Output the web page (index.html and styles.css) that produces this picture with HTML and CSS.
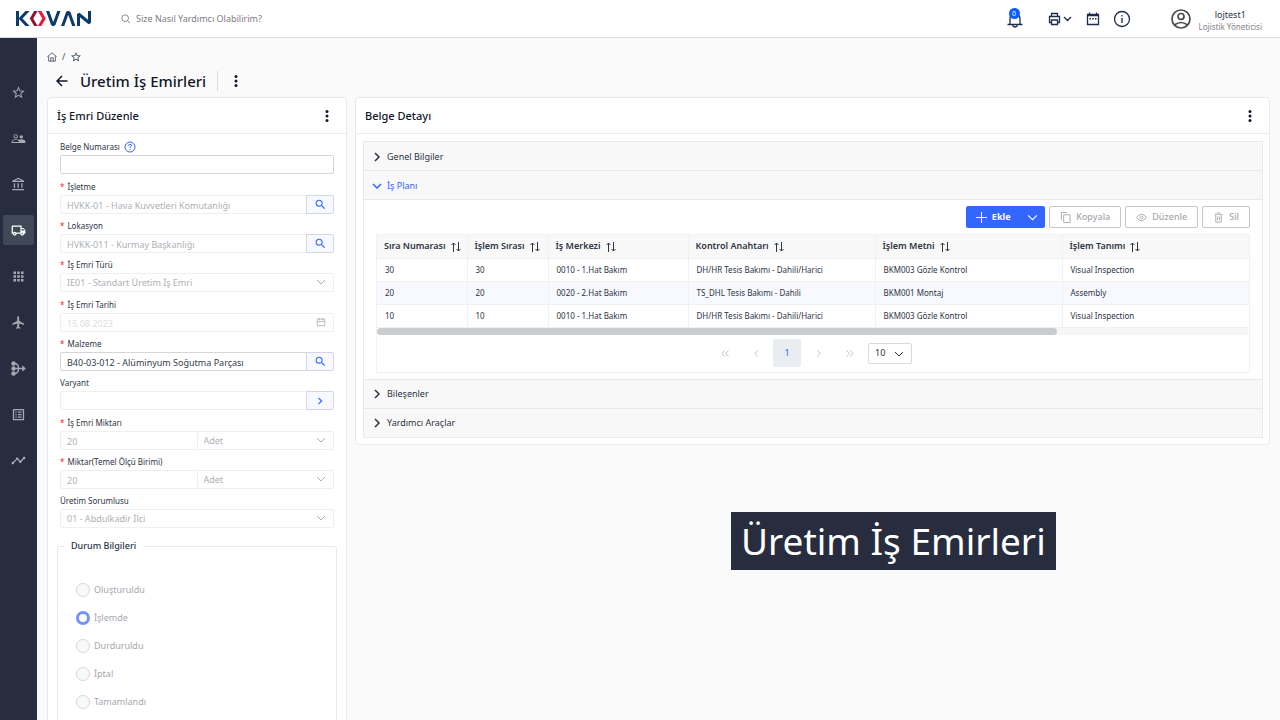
FILE: index.html
```html
<!DOCTYPE html>
<html lang="tr">
<head>
<meta charset="utf-8">
<meta name="viewport" content="width=device-width, initial-scale=1">
<title>Üretim İş Emirleri</title>
<link rel="stylesheet" href="styles.css">
</head>
<body>
<svg class="sprite" aria-hidden="true">
  <symbol id="dots" viewBox="0 0 4 14"><circle cx="2" cy="2.500" r="1.500"/><circle cx="2" cy="7" r="1.500"/><circle cx="2" cy="11.500" r="1.500"/></symbol>
  <symbol id="down" viewBox="0 0 10 10"><path d="M1 3l4 4 4-4" class="line"/></symbol>
  <symbol id="right" viewBox="0 0 10 10"><path d="M3 1l4 4-4 4" class="line"/></symbol>
  <symbol id="star" viewBox="0 0 24 24"><path d="M22 9.240l-7.190-.620L12 2 9.190 8.630 2 9.240l5.460 4.730L5.820 21 12 17.270 18.180 21l-1.630-7.030L22 9.240zM12 15.400l-3.760 2.270 1-4.280-3.320-2.880 4.380-.380L12 6.100l1.710 4.040 4.380.380-3.320 2.880 1 4.280L12 15.400z"/></symbol>
  <symbol id="find" viewBox="0 0 24 24"><path d="M15.500 14h-.790l-.280-.270A6.471 6.471 0 0 0 16 9.500 6.500 6.500 0 1 0 9.500 16c1.610 0 3.090-.590 4.230-1.570l.270.280v.790l5 4.990L20.490 19l-4.990-5zm-6 0C7.010 14 5 11.990 5 9.500S7.010 5 9.500 5 14 7.010 14 9.500 11.990 14 9.500 14z"/></symbol>
  <symbol id="sort" viewBox="0 0 10 10"><path d="M2.500 10V1M.500 3l2-2 2 2M7.500 0v9M5.500 7l2 2 2-2" class="line"/></symbol>
</svg>
<header class="topbar">
  <a class="brand" href="#" aria-label="KOVAN">
    <svg class="logo" viewBox="0 0 75 15" fill="none" stroke-width="3">
      <g stroke="#0b3a6b" fill="none">
        <path d="M1.500 0v15M12.500-1L4.500 7.500l8 8.500"/>
        <path d="M31.300-1l5.200 14.500h1.500L43.200-1" stroke-linejoin="bevel"/>
        <path d="M46.300 16l5.200-14.500H53L58.200 16" stroke-linejoin="bevel"/>
        <path d="M62.500 15V3l11 9V0" stroke-linejoin="bevel"/>
      </g>
      <path d="M20.500-1L15.500 7.500l5 8.500" fill="none" stroke="#8f1430"/>
      <path d="M23-1l5 8.500L23 16" fill="none" stroke="#f0143c"/>
    </svg>
  </a>
  <label class="search"><svg viewBox="0 0 12 12"><circle cx="5" cy="5" r="4" class="line"/><path d="M8 8l3 3" class="line"/></svg><input type="search" aria-label="Ara" placeholder="Size Nasıl Yardımcı Olabilirim?"></label>
  <nav class="tools">
    <button class="bell" aria-label="Bildirimler"><svg viewBox="0 0 18 18"><path d="M1.500 14.500h15M4 14.500V8.500a5 5 0 0 1 10 0v6M6.500 15.500q2.500 3 5 0" class="line"/></svg><span class="badge">0</span></button>
    <button class="print" aria-label="Yazdır"><svg viewBox="0 0 24 14"><path d="M3.500 4V1.500h6V4M3 10.500H1.500V4.500h10v6H10M3.500 8h6v4.500h-6zM16 5l3.500 3.500L23 5" class="line"/></svg></button>
    <button class="cal" aria-label="Takvim"><svg viewBox="0 0 14 14"><path d="M1.500 2.500h11v10h-11zM1.500 3.500h11M3.500 .500v2M10.500 .500v2" class="line"/><path d="M3.500 6h1.500v1.500H3.500zM6.250 6h1.500v1.500h-1.500zM9 6h1.500v1.500H9z"/></svg></button>
    <button class="info" aria-label="Bilgi"><svg viewBox="0 0 18 18"><circle cx="9" cy="9" r="7.500" class="line"/><path d="M9 8v5M9 5v1.500" class="line"/></svg></button>
  </nav>
  <div class="user">
    <svg viewBox="0 0 20 20"><circle cx="10" cy="10" r="9" class="line"/><circle cx="10" cy="7.500" r="3" class="line"/><path d="M3.500 16q6.500-5 13 0" class="line"/></svg>
    <div class="who"><span>lojtest1</span><small>Lojistik Yöneticisi</small></div>
  </div>
</header>
<div class="shell">
  <nav class="rail">
    <a href="#" aria-label="Favoriler"><svg><use href="#star"/></svg></a>
    <a href="#" aria-label="Personel"><svg viewBox="0 0 24 24"><path d="M16.500 13c-1.200 0-3.070.340-4.500 1-1.430-.670-3.300-1-4.500-1C5.330 13 1 14.080 1 16.250V19h22v-2.750c0-2.170-4.330-3.250-6.500-3.250zm-4 4.500h-10v-1.250c0-.540 2.560-1.750 5-1.750s5 1.210 5 1.750v1.250zM7.500 12A3.500 3.500 0 1 0 7.500 5a3.500 3.500 0 0 0 0 7zm0-5.500a2 2 0 1 1 0 4 2 2 0 0 1 0-4zM16.500 12a2.700 2.700 0 1 0 0-5.400 2.700 2.700 0 0 0 0 5.400z"/></svg></a>
    <a href="#" aria-label="Finans"><svg viewBox="0 0 24 24"><path d="M6.500 10h-2v7h2v-7zm6 0h-2v7h2v-7zm8.500 9H2v2h19v-2zm-2.500-9h-2v7h2v-7zm-7-6.740L16.710 6H6.290l5.210-2.740m0-2.260L2 6v2h19V6l-9.500-5z"/></svg></a>
    <a href="#" class="on" aria-label="Lojistik"><svg viewBox="0 0 24 24"><path d="M20 8h-3V4H3c-1.100 0-2 .900-2 2v11h2c0 1.660 1.340 3 3 3s3-1.340 3-3h6c0 1.660 1.340 3 3 3s3-1.340 3-3h2v-5l-3-4zm-.500 1.500l1.960 2.500H17V9.500h2.500zM6 18c-.550 0-1-.450-1-1s.450-1 1-1 1 .450 1 1-.450 1-1 1zm2.220-3c-.550-.610-1.330-1-2.220-1s-1.670.390-2.220 1H3V6h12v9H8.220zM18 18c-.550 0-1-.450-1-1s.450-1 1-1 1 .450 1 1-.450 1-1 1z"/></svg></a>
    <a href="#" aria-label="Uygulamalar"><svg viewBox="0 0 24 24"><path d="M4 8h4V4H4v4zm6 12h4v-4h-4v4zm-6 0h4v-4H4v4zm0-6h4v-4H4v4zm6 0h4v-4h-4v4zm6-10v4h4V4h-4zm-6 4h4V4h-4v4zm6 6h4v-4h-4v4zm0 6h4v-4h-4v4z"/></svg></a>
    <a href="#" aria-label="Uçuş"><svg viewBox="0 0 24 24"><path d="M21 16v-2l-8-5V3.500c0-.830-.670-1.500-1.500-1.500S10 2.670 10 3.500V9l-8 5v2l8-2.500V19l-2 1.500V22l3.500-1 3.500 1v-1.500L13 19v-5.500l8 2.500z"/></svg></a>
    <a href="#" aria-label="Süreç"><svg viewBox="0 0 24 24"><circle cx="4" cy="4" r="3.500"/><circle cx="4" cy="12" r="3.500"/><circle cx="4" cy="20" r="3.500"/><path d="M4 4h3q5 1 5 8t-5 8H4M4 12h18M18 8.500l4 3.500-4 3.500" fill="none" stroke="currentColor" stroke-width="2.200"/></svg></a>
    <a href="#" aria-label="Liste"><svg viewBox="0 0 24 24"><path d="M19 5v14H5V5h14m1.100-2H3.900c-.500 0-.900.400-.900.900v16.200c0 .400.400.900.900.900h16.200c.400 0 .900-.500.900-.900V3.900c0-.500-.500-.900-.900-.900zM11 7h6v2h-6V7zm0 4h6v2h-6v-2zm0 4h6v2h-6zM7 7h2v2H7zm0 4h2v2H7zm0 4h2v2H7z"/></svg></a>
    <a href="#" aria-label="Raporlar"><svg viewBox="0 0 24 24"><path d="M23 8c0 1.100-.900 2-2 2-.180 0-.350-.020-.510-.070l-3.560 3.550c.050.160.070.340.070.520 0 1.100-.900 2-2 2s-2-.900-2-2c0-.180.020-.360.070-.520l-2.550-2.550c-.160.050-.340.070-.520.070s-.360-.020-.520-.070l-4.550 4.560c.050.160.070.330.070.510 0 1.100-.900 2-2 2s-2-.900-2-2 .900-2 2-2c.180 0 .350.020.510.070l4.560-4.550C8.020 9.360 8 9.180 8 9c0-1.100.900-2 2-2s2 .900 2 2c0 .180-.020.360-.070.520l2.550 2.550c.160-.050.340-.070.520-.070s.360.020.520.070l3.550-3.560C19.020 8.350 19 8.180 19 8c0-1.100.900-2 2-2s2 .900 2 2z"/></svg></a>
  </nav>
  <main class="page">
    <div class="crumbs"><a href="#" aria-label="Ana sayfa"><svg viewBox="0 0 12 12"><path d="M.500 5.500L6 1l5.500 4.500M2 5v6h8V5M4.500 11V7h3v4" class="line"/></svg></a><span>/</span><a href="#" aria-label="Favori"><svg class="fav"><use href="#star"/></svg></a></div>
    <div class="title">
      <button class="back" aria-label="Geri"><svg viewBox="0 0 12 12"><path d="M11.500 6H1M6 1L1 6l5 5" class="line"/></svg></button>
      <h1>Üretim İş Emirleri</h1>
      <button class="more" aria-label="Menü"><svg><use href="#dots"/></svg></button>
    </div>
    <div class="panels">
      <section class="panel">
        <div class="phead"><h2>İş Emri Düzenle</h2><button class="more" aria-label="Menü"><svg><use href="#dots"/></svg></button></div>
        <form class="form">
          <div class="group">
            <div class="row"><label for="f1">Belge Numarası <svg class="help" viewBox="0 0 12 12"><circle cx="6" cy="6" r="5" class="line"/><path d="M4.500 4.800q0-1.500 1.500-1.500t1.500 1.300Q7.500 5.500 6 6.200V7M6 8v1" class="line"/></svg></label><div class="field open"><input id="f1"></div></div>
          </div>
          <div class="group">
            <div class="row"><label for="f2" class="req">İşletme</label><div class="field"><input id="f2" disabled value="HVKK-01 - Hava Kuvvetleri Komutanlığı"><button type="button" aria-label="Bul"><svg><use href="#find"/></svg></button></div></div>
            <div class="row"><label for="f3" class="req">Lokasyon</label><div class="field"><input id="f3" disabled value="HVKK-011 - Kurmay Başkanlığı"><button type="button" aria-label="Bul"><svg><use href="#find"/></svg></button></div></div>
            <div class="row"><label for="f4" class="req">İş Emri Türü</label><div class="field pick"><select id="f4" disabled><option>IE01 - Standart Üretim İş Emri</option></select><svg><use href="#down"/></svg></div></div>
          </div>
          <div class="group">
            <div class="row"><label for="f5" class="req">İş Emri Tarihi</label><div class="field pick faint"><input id="f5" disabled value="15.08.2023"><svg viewBox="0 0 12 12"><path d="M1.500 2.500h9v8h-9zM1.500 5.500h9M4 1v3M8 1v3" class="line"/></svg></div></div>
            <div class="row"><label for="f6" class="req">Malzeme</label><div class="field open"><input id="f6" value="B40-03-012 - Alüminyum Soğutma Parçası"><button type="button" aria-label="Bul"><svg><use href="#find"/></svg></button></div></div>
            <div class="row"><label for="f7">Varyant</label><div class="field"><input id="f7" disabled><button type="button" aria-label="Seç"><svg class="go"><use href="#right"/></svg></button></div></div>
          </div>
          <div class="group">
            <div class="row"><label for="f8" class="req">İş Emri Miktarı</label><div class="pair"><div class="field"><input id="f8" disabled value="20"></div><div class="field pick"><select aria-label="Birim" disabled><option>Adet</option></select><svg><use href="#down"/></svg></div></div></div>
            <div class="row"><label for="f9" class="req">Miktar(Temel Ölçü Birimi)</label><div class="pair"><div class="field"><input id="f9" disabled value="20"></div><div class="field pick"><select aria-label="Temel birim" disabled><option>Adet</option></select><svg><use href="#down"/></svg></div></div></div>
            <div class="row"><label for="f10">Üretim Sorumlusu</label><div class="field pick"><select id="f10" disabled><option>01 - Abdulkadir İlci</option></select><svg><use href="#down"/></svg></div></div>
          </div>
          <fieldset class="status">
            <legend>Durum Bilgileri</legend>
            <label><input type="radio" name="st" disabled>Oluşturuldu</label>
            <label><input type="radio" name="st" disabled checked>İşlemde</label>
            <label><input type="radio" name="st" disabled>Durduruldu</label>
            <label><input type="radio" name="st" disabled>İptal</label>
            <label><input type="radio" name="st" disabled>Tamamlandı</label>
          </fieldset>
        </form>
      </section>
      <section class="panel detail">
        <div class="phead"><h2>Belge Detayı</h2><button class="more" aria-label="Menü"><svg><use href="#dots"/></svg></button></div>
        <div class="accordion">
          <button class="fold"><svg><use href="#right"/></svg>Genel Bilgiler</button>
          <button class="fold active"><svg><use href="#down"/></svg>İş Planı</button>
          <div class="plan">
            <div class="actions">
              <div class="split"><button><svg viewBox="0 0 10 10"><path d="M5 0v10M0 5h10" class="line"/></svg>Ekle</button><button aria-label="Diğer"><svg><use href="#down"/></svg></button></div>
              <button class="ghost"><svg viewBox="0 0 12 12"><path d="M1.500 9V.500H8M4 3h7v8.500H4z" class="line"/></svg>Kopyala</button>
              <button class="ghost"><svg viewBox="0 0 12 12"><path d="M.500 6Q6-1 11.500 6 6 13 .500 6z" class="line"/><circle cx="6" cy="6" r="1.500" class="line"/></svg>Düzenle</button>
              <button class="ghost"><svg viewBox="0 0 12 12"><path d="M2 2.500h8M4.500 1h3M3 3v8h6V3M5 5v4M7 5v4" class="line"/></svg>Sil</button>
            </div>
            <div class="grid">
              <table>
                <colgroup><col class="c1"><col class="c2"><col class="c3"><col class="c4"><col class="c4"><col></colgroup>
                <thead><tr><th>Sıra Numarası<svg><use href="#sort"/></svg></th><th>İşlem Sırası<svg><use href="#sort"/></svg></th><th>İş Merkezi<svg><use href="#sort"/></svg></th><th>Kontrol Anahtarı<svg><use href="#sort"/></svg></th><th>İşlem Metni<svg><use href="#sort"/></svg></th><th>İşlem Tanımı<svg><use href="#sort"/></svg></th></tr></thead>
                <tbody>
                  <tr><td>30</td><td>30</td><td>0010 - 1.Hat Bakım</td><td>DH/HR Tesis Bakımı - Dahili/Harici</td><td>BKM003 Gözle Kontrol</td><td>Visual Inspection</td></tr>
                  <tr><td>20</td><td>20</td><td>0020 - 2.Hat Bakım</td><td>TS_DHL Tesis Bakımı - Dahili</td><td>BKM001 Montaj</td><td>Assembly</td></tr>
                  <tr><td>10</td><td>10</td><td>0010 - 1.Hat Bakım</td><td>DH/HR Tesis Bakımı - Dahili/Harici</td><td>BKM003 Gözle Kontrol</td><td>Visual Inspection</td></tr>
                </tbody>
              </table>
              <div class="track"><div class="thumb"></div></div>
              <div class="pager">
                <button aria-label="İlk"><svg viewBox="0 0 10 10"><path d="M4.500 1.500L1 5l3.500 3.500M8.500 1.500L5 5l3.500 3.500" class="line"/></svg></button>
                <button aria-label="Önceki"><svg viewBox="0 0 10 10"><path d="M6.500 1.500L3 5l3.500 3.500" class="line"/></svg></button>
                <button class="cur">1</button>
                <button aria-label="Sonraki"><svg viewBox="0 0 10 10"><path d="M3.500 1.500L7 5 3.500 8.500" class="line"/></svg></button>
                <button aria-label="Son"><svg viewBox="0 0 10 10"><path d="M1.500 1.500L5 5 1.500 8.500M5.500 1.500L9 5 5.500 8.500" class="line"/></svg></button>
                <div class="size"><select aria-label="Sayfa boyutu"><option>10</option></select><svg><use href="#down"/></svg></div>
              </div>
            </div>
          </div>
          <button class="fold"><svg><use href="#right"/></svg>Bileşenler</button>
          <button class="fold"><svg><use href="#right"/></svg>Yardımcı Araçlar</button>
        </div>
      </section>
    </div>
  </main>
</div>
<div class="caption">Üretim İş Emirleri</div>
</body>
</html>
```
FILE: styles.css
```css
* { box-sizing: border-box; }
body { margin: 0; height: 100vh; display: flex; flex-direction: column; overflow: hidden; background: #fafafa; color: #2c3444; font: 9px/16px "Noto Sans", "Open Sans", sans-serif; }
button, input, select { font: inherit; color: inherit; margin: 0; padding: 0; border: 0; background: none; }
h1, h2 { margin: 0; font-weight: 500; color: #10182a; }
svg { display: block; flex: none; fill: currentColor; }
.line { fill: none; stroke: currentColor; }
.sprite { position: absolute; width: 0; height: 0; }
a { color: inherit; }

.topbar { flex: none; height: 38px; display: flex; align-items: center; background: #fff; border-bottom: 1px solid #dcdcde; position: relative; padding: 0 18px 0 16px; }
.logo { width: 75px; height: 15px; }
.search { display: flex; flex: 1; align-items: center; gap: 5px; margin-left: 30px; color: #777; }
.search svg { width: 10px; height: 10px; }
.search input { flex: 1; outline: 0; padding-top: 1px; }
.search input::placeholder { color: #7c7c82; opacity: 1; }
.tools { display: flex; align-items: center; color: #1f2c4d; }
.bell { position: relative; margin-right: 24px; }
.bell svg, .info svg { width: 18px; height: 18px; stroke-width: 1.3; }
.bell svg { margin-top: 1px; }
.badge { position: absolute; left: 3px; top: -1px; width: 11px; height: 11px; border-radius: 50%; background: #0b5cff; color: #fff; font-size: 7px; line-height: 11px; }
.print { margin-right: 14px; }
.print svg { width: 24px; height: 14px; stroke-width: 1.3; }
.cal { margin-right: 13px; }
.cal svg { width: 14px; height: 14px; stroke-width: 1.3; }
.user { display: flex; align-items: center; gap: 8px; margin-left: 40px; }
.user svg { width: 20px; height: 20px; color: #4a4a4a; stroke-width: 1.7; }
.who { display: flex; flex-direction: column; text-align: center; line-height: 12px; padding-top: 4px; }
.who small { font-size: 8px; color: #84848a; }

.shell { flex: 1; min-height: 0; display: flex; }
.rail { flex: none; width: 37px; background: #272d3f; color: #a6aab3; display: flex; flex-direction: column; align-items: center; gap: 16px; padding-top: 39px; }
.rail a { width: 31px; height: 30px; display: grid; place-items: center; border-radius: 2px; }
.rail svg { width: 15px; height: 15px; }
.rail .on { background: #414857; color: #fff; }

.page { flex: 1; min-width: 0; padding: 12px 10px 0; display: flex; flex-direction: column; }
.crumbs { display: flex; align-items: center; gap: 5px; height: 14px; color: #444c5c; }
.crumbs svg { width: 10px; height: 10px; }
.crumbs .fav { width: 12px; height: 12px; }
.title { display: flex; align-items: center; height: 33px; color: #10182a; }
.title h1 { font-size: 15px; line-height: 20px; margin-left: 12px; padding-right: 11px; border-right: 1px solid #dcdcde; }
.back { margin-left: 9px; }
.back svg { width: 12px; height: 12px; stroke-width: 1.5; }
.more { width: 20px; display: grid; place-items: center; color: #10182a; }
.more svg { width: 4px; height: 14px; }
.title .more { margin-left: 8px; }
.panels { flex: 1; min-height: 0; display: grid; grid-template-columns: 300px minmax(0, 1fr); gap: 8px; align-items: start; }
.panel { background: #fff; border: 1px solid #e9e9eb; border-radius: 4px; }
.phead { display: flex; justify-content: space-between; align-items: center; height: 36px; padding: 0 9px; border-bottom: 1px solid #ececee; }
.phead h2 { font-size: 11px; }

.form { padding: 5px 9px 0; }
.group { margin: 0 3px 5px; display: flex; flex-direction: column; gap: 4px; }
.row > label { display: flex; align-items: center; height: 16px; gap: 4px; font-size: 8px; }
.row > .req { gap: 3px; }
.req::before { content: "*"; color: #f22; }
.help { width: 12px; height: 12px; color: #3366ff; }
.field { position: relative; display: flex; flex: 1; min-width: 0; height: 19px; color: #adb0b5; }
.field input, .field select { flex: 1; min-width: 0; height: 19px; padding: 1px 6px 0; border: 1px solid #efeff0; border-radius: 2px; background: #fff; appearance: none; opacity: 1; }
.open { color: #333b49; }
.field.open input { border-color: #d5d6d9; }
.field button { width: 28px; display: grid; place-items: center; margin-left: -1px; border: 1px solid #d3d7e4; border-radius: 0 2px 2px 0; background: #f8f9ff; color: #3366ff; position: relative; }
.field button svg { width: 13px; height: 13px; }
.field button .go { width: 8px; height: 8px; stroke-width: 1.5; }
.pick > svg { position: absolute; right: 8px; top: 4px; width: 10px; height: 10px; }
.faint input { color: #dcdde0; }
.pair { display: flex; }
.pair .field + .field { margin-left: -1px; }

.status { margin: 10px 0 0; padding: 22px 18px; border: 1px solid #e9e9eb; border-radius: 2px; display: flex; flex-direction: column; }
.status legend { margin-left: -12px; padding: 0 7px; font-weight: 500; }
.status label { display: flex; align-items: center; gap: 4px; height: 28px; color: #a5a8ae; }
.status input { appearance: none; width: 14px; height: 14px; border: 1px solid #d5d8d8; border-radius: 50%; background: #f8f9f9; }
.status input:checked { border: 3px solid #7392ff; background: #fff; }

.accordion { margin: 7px 6px 6px 7px; border: 1px solid #e9e9eb; }
.fold { width: 100%; height: 29px; display: flex; align-items: center; gap: 5px; padding: 1px 0 0 8px; background: #f8f8f8; border-bottom: 1px solid #e9e9eb; }
.fold:last-child { border-bottom: 0; height: 28px; }
.fold svg { width: 10px; height: 10px; stroke-width: 1.5; }
.active { color: #3366ff; }
.plan { padding: 6px 12px; border-bottom: 1px solid #e9e9eb; }
.actions { display: flex; justify-content: flex-end; gap: 4px; margin-bottom: 6px; }
.actions button { display: flex; align-items: center; justify-content: center; gap: 5px; height: 22px; font-weight: 700; }
.actions svg { width: 11px; height: 11px; }
.split { display: flex; background: #3366ff; color: #fff; border-radius: 2px; }
.split button:first-child { width: 54px; }
.split button:last-child { width: 25px; }
.actions .ghost { border: 1px solid #c5c7cb; border-radius: 2px; color: #a5a8ae; padding: 0 10px; font-weight: 500; }
.grid { border: 1px solid #f1f1f2; }
table { width: 100%; table-layout: fixed; border-collapse: collapse; }
.c1 { width: 90px; } .c2 { width: 81px; } .c3 { width: 140px; } .c4 { width: 187px; }
th, td { text-align: left; padding: 0 8px; white-space: nowrap; border-right: 1px solid #f1f1f2; height: 23px; font-size: 8px; border-bottom: 1px solid #f1f1f2; }
th { background: #f8f8f8; font-weight: 600; font-size: 9px; padding: 0 7px; }
th svg { display: inline-block; width: 10px; height: 10px; margin-left: 5px; vertical-align: middle; }
tbody tr:nth-child(even) { background: #f8f9ff; }
th:last-child, td:last-child { border-right: 0; }
.track { height: 7px; background: #f6f6f6; border-radius: 4px; }
.thumb { width: 78%; height: 7px; background: #cbccd0; border-radius: 4px; }
.pager { height: 37px; display: flex; justify-content: center; align-items: center; gap: 3px; padding-right: 3px; color: #b9bcc2; }
.pager button { width: 28px; height: 28px; display: grid; place-items: center; }
.pager button svg { width: 9px; height: 9px; }
.pager .cur { background: #e9edf1; color: #3366ff; border-radius: 2px; }
.size { position: relative; color: #2c3444; margin-left: 2px; }
.size select { display: block; width: 44px; height: 21px; border: 1px solid #d8dade; border-radius: 2px; padding-left: 6px; appearance: none; font-size: 9px; }
.size svg { position: absolute; right: 8px; top: 6px; width: 10px; height: 10px; }

.caption { position: fixed; left: 731px; top: 512px; padding: 0 10px; height: 58px; background: #272d3f; color: #fff; font-size: 37px; line-height: 58px; white-space: nowrap; }
```
